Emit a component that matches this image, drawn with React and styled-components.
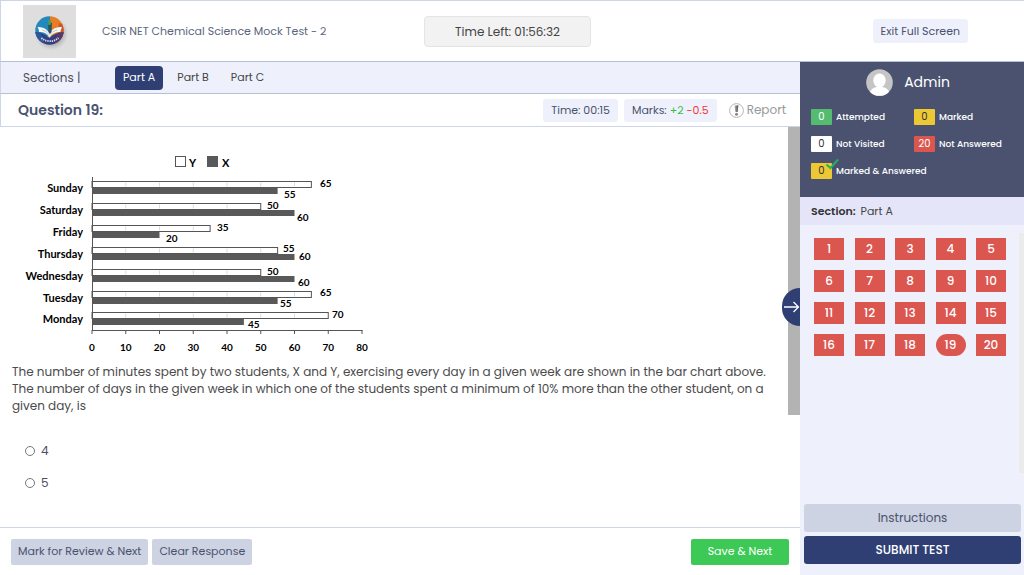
import React, { useState } from 'react';
import styled, { createGlobalStyle } from 'styled-components';

const GlobalStyle = createGlobalStyle`
  * {
    box-sizing: border-box;
  }
  body {
    margin: 0;
    background: #fff;
    color: #4b4f5c;
    font-family: Poppins, Inter, "Liberation Sans", sans-serif;
    font-size: 12px;
  }
  button {
    font-family: inherit;
    border: 0;
    padding: 0;
    cursor: pointer;
  }
`;

const Page = styled.div`
  display: flex;
  flex-direction: column;
  min-height: 100vh;
`;

const Header = styled.header`
  display: grid;
  grid-template-columns: minmax(0, 1fr) auto minmax(0, 1fr);
  align-items: center;
  height: 62px;
  padding-right: 10px;
  border-top: 1px solid #cfd5e8;
  border-left: 1px solid #cfd5e8;
  border-bottom: 1px solid #b6bfd6;
`;

const Brand = styled.div`
  display: flex;
  align-items: center;
  gap: 26px;
  padding-left: 22px;

  svg {
    display: block;
  }
`;

const TestName = styled.h1`
  margin: 0;
  font-size: 11px;
  font-weight: 400;
  color: #5b6580;
  white-space: nowrap;
`;

const Timer = styled.div`
  min-width: 167px;
  padding: 5px 20px;
  border: 1px solid #e4e4e4;
  border-radius: 4px;
  background: #f2f2f2;
  color: #444;
  font-size: 12px;
  line-height: 19px;
  text-align: center;
`;

const HeaderRight = styled.div`
  display: flex;
  justify-content: flex-end;
  padding-right: 46px;
`;

const ExitButton = styled.button`
  height: 24px;
  padding: 0 8px;
  border-radius: 3px;
  background: #eef1fb;
  color: #4a5270;
  font-size: 11px;
`;

const Body = styled.div`
  display: grid;
  flex: 1;
  grid-template-columns: 25fr 7fr;
`;

const Main = styled.main`
  position: relative;
  display: flex;
  flex-direction: column;
  min-width: 0;
`;

const SectionBar = styled.nav`
  display: flex;
  align-items: center;
  height: 32px;
  padding-left: 22px;
  border-left: 1px solid #cfd5e8;
  border-bottom: 1px solid #b6bfd6;
  background: #eef1fb;
`;

const SectionLabel = styled.span`
  width: 92px;
  font-size: 12px;
  color: #4b4f5c;
`;

const Tab = styled.button`
  height: 24px;
  padding: 0 8px;
  margin-right: 6px;
  border-radius: 4px;
  background: ${(props) => (props.$active ? '#2f3f74' : 'transparent')};
  color: ${(props) => (props.$active ? '#fff' : '#444')};
  font-size: 11px;
`;

const QuestionBar = styled.div`
  display: flex;
  align-items: center;
  gap: 6px;
  height: 33px;
  padding: 0 14px 0 17px;
  border-left: 1px solid #cfd5e8;
  border-bottom: 1px solid #cfd5e8;
`;

const QuestionTitle = styled.h2`
  flex: 1;
  margin: 0;
  font-size: 14px;
  font-weight: 600;
  color: #4a5270;
`;

const Pill = styled.span`
  padding: 3px 8px;
  border-radius: 3px;
  background: #eef1fb;
  color: #4a5270;
  font-size: 11px;
  line-height: 17px;
`;

const Mark = styled.span`
  color: ${(props) => (props.$negative ? '#f03a3a' : '#35bf4b')};
`;

const ReportButton = styled.button`
  display: flex;
  align-items: center;
  gap: 3px;
  padding-left: 6px;
  background: none;
  color: #999;
  font-size: 12px;
`;

const QuestionArea = styled.div`
  display: flex;
  flex: 1;
`;

const QuestionContent = styled.div`
  flex: 1;
  min-width: 0;
  padding: 23px 12px 20px;
`;

const ScrollTrack = styled.div`
  width: ${(props) => (props.$thin ? '5px' : '12px')};
`;

const ScrollThumb = styled.div`
  height: ${(props) => (props.$thin ? '100%' : '72%')};
  background: ${(props) => (props.$thin ? '#ebebeb' : '#b3b3b3')};
`;

const Chart = styled.svg`
  display: block;
  font-family: Lato, "Open Sans", sans-serif;
  font-size: 10px;
  font-weight: 700;
  fill: #000;
`;

const QuestionText = styled.p`
  margin: 4px 0 0;
  font-size: 12px;
  line-height: 17px;
  color: #4b4b4b;
`;

const Options = styled.div`
  display: flex;
  flex-direction: column;
  gap: 16px;
  padding: 29px 0 0 13px;
`;

const Option = styled.label`
  display: flex;
  align-items: center;
  gap: 6px;
  font-size: 12px;
  line-height: 16px;

  input {
    appearance: none;
    width: 10px;
    height: 10px;
    margin: 0;
    border: 1px solid #777;
    border-radius: 50%;
    background: #fff;
  }
  input:checked {
    border: 3px solid #2f3f74;
  }
`;

const Footer = styled.footer`
  display: flex;
  align-items: center;
  gap: 4px;
  height: 48px;
  padding: 0 11px;
  border-top: 1px solid #cfd8e2;
`;

const FooterButton = styled.button`
  height: 26px;
  padding: 0 7px;
  border-radius: 2px;
  background: #cdd3e2;
  color: #4a5270;
  font-size: 11px;
`;

const SaveButton = styled(FooterButton)`
  min-width: 98px;
  margin-left: auto;
  background: #3dc955;
  color: #fff;
`;

const CollapseButton = styled.button`
  position: absolute;
  right: 0;
  top: calc(50% - 12px);
  transform: translateY(-50%);
  display: flex;
  align-items: center;
  justify-content: flex-end;
  width: 18px;
  height: 38px;
  border-radius: 19px 0 0 19px;
  background: #2f3f74;
`;

const Sidebar = styled.aside`
  display: flex;
  flex-direction: column;
  background: #eef1fb;
`;

const Profile = styled.div`
  height: 135px;
  padding: 7px 11px;
  background: #4a5270;
  color: #fff;
`;

const User = styled.div`
  display: flex;
  align-items: center;
  justify-content: center;
  gap: 11px;
  height: 27px;
  padding-right: 8px;
  font-size: 14px;
`;

const Legend = styled.ul`
  display: grid;
  grid-template-columns: 103px 1fr;
  row-gap: 11px;
  margin: 13px 0 0;
  padding: 0;
  list-style: none;
`;

const LegendItem = styled.li`
  display: flex;
  align-items: center;
  gap: 4px;
  grid-column: ${(props) => (props.$wide ? '1 / -1' : 'auto')};
  font-size: 9px;
  font-weight: 500;
  line-height: 16px;
  white-space: nowrap;
`;

const Badge = styled.span`
  position: relative;
  width: 21px;
  height: 16px;
  border-radius: 1px;
  background: ${(props) => props.$bg};
  color: ${(props) => props.$color || '#333'};
  font-size: 10px;
  font-weight: 400;
  text-align: center;

  svg {
    position: absolute;
    right: -7px;
    top: -5px;
  }
`;

const SectionName = styled.div`
  height: 28px;
  padding-left: 11px;
  background: #e5e5f9;
  color: #444;
  font-size: 11px;
  line-height: 28px;

  strong {
    margin-right: 2px;
    color: #333;
    font-weight: 600;
  }
`;

const PaletteArea = styled.div`
  display: flex;
  justify-content: space-between;
  height: 240px;
  margin-top: 8px;
`;

const Palette = styled.div`
  display: grid;
  flex: 1;
  grid-template-columns: repeat(5, 30px);
  align-content: start;
  justify-content: space-between;
  row-gap: 10px;
  padding: 5px 13px 0 14px;
`;

const PaletteButton = styled.button`
  height: 22px;
  border-radius: ${(props) => (props.$current ? '11px' : '0')};
  background: #db564f;
  color: #fff;
  font-size: 12px;
  font-weight: 500;
`;

const SideActions = styled.div`
  display: flex;
  flex-direction: column;
  gap: 4px;
  margin-top: auto;
  padding: 0 3px 11px 4px;
`;

const SideButton = styled.button`
  height: 28px;
  border-radius: 3px;
  background: ${(props) => (props.$primary ? '#2f3f74' : '#cdd3e2')};
  color: ${(props) => (props.$primary ? '#fff' : '#4a5270')};
  font-size: 12px;
  font-weight: ${(props) => (props.$primary ? 500 : 400)};
`;

const sections = ['Part A', 'Part B', 'Part C'];

// yLabel / xLabel: where the value sits, [x, offset from the row top]
const days = [
  { day: 'Sunday', y: 65, x: 55, yLabel: [308, 5], xLabel: [272, 16] },
  { day: 'Saturday', y: 50, x: 60, yLabel: [255, 5], xLabel: [285, 17] },
  { day: 'Friday', y: 35, x: 20, yLabel: [205, 5], xLabel: [154, 16] },
  { day: 'Thursday', y: 55, x: 60, yLabel: [271, 4], xLabel: [287, 12] },
  { day: 'Wednesday', y: 50, x: 60, yLabel: [255, 5], xLabel: [286, 16] },
  { day: 'Tuesday', y: 65, x: 55, yLabel: [308, 4], xLabel: [268, 15] },
  { day: 'Monday', y: 70, x: 45, yLabel: [320, 5], xLabel: [236, 15] },
];

const ticks = [0, 10, 20, 30, 40, 50, 60, 70, 80];
const axisX = 80;
const axisBottom = 181;
const rowPitch = 21.9;
const toX = (value) => axisX + value * 3.375;

function MinutesChart() {
  return (
    <Chart width="365" height="209" viewBox="0 0 365 209" role="img" aria-label="Minutes exercised per day">
      <rect x="163.5" y="6.5" width="10" height="10" fill="#fff" stroke="#555" />
      <text x="177" y="17" fontSize="11">Y</text>
      <rect x="195" y="6" width="11" height="11" fill="#595959" />
      <text x="210" y="17" fontSize="11">X</text>
      {days.map((d, i) => {
        const top = Math.round(31 + i * rowPitch) + 0.5;
        return (
          <g key={d.day}>
            <text x="71" y={top + 10} textAnchor="end" fontSize="11">{d.day}</text>
            <rect x={axisX} y={top} width={toX(d.y) - axisX} height="6" fill="#fff" stroke="#555" />
            {ticks.filter((t) => t > 0 && t < d.y && t < 70).map((t) => (
              <line key={t} x1={toX(t)} x2={toX(t)} y1={top + 1} y2={top + 5} stroke="#dcdcdc" />
            ))}
            <rect x={axisX} y={top + 6.5} width={toX(d.x) - axisX} height="6" fill="#595959" />
            <text x={d.yLabel[0]} y={top + d.yLabel[1]}>{d.y}</text>
            <text x={d.xLabel[0]} y={top + d.xLabel[1]}>{d.x}</text>
          </g>
        );
      })}
      <path d={`M80.5 27V${axisBottom}M80 180.5H350.5`} stroke="#555" fill="none" />
      {ticks.map((t) => (
        <g key={t}>
          <line x1={toX(t)} x2={toX(t)} y1="180" y2="184" stroke="#555" />
          <text x={toX(t)} y="201" textAnchor="middle">{t}</text>
        </g>
      ))}
    </Chart>
  );
}

function Logo() {
  return (
    <svg width="53" height="53" viewBox="0 0 53 53" role="img" aria-label="Logo">
      <defs>
        <clipPath id="disc"><circle cx="26.5" cy="25.5" r="14.2" /></clipPath>
        <radialGradient id="shadow">
          <stop offset="0.6" stopColor="#888" stopOpacity="0.6" />
          <stop offset="1" stopColor="#aaa" stopOpacity="0" />
        </radialGradient>
      </defs>
      <rect width="53" height="53" fill="#dedede" />
      <circle cx="28.500" cy="28.500" r="17" fill="url(#shadow)" />
      <g clipPath="url(#disc)">
        <path d="M12 10h15v21H12z" fill="#2389bd" />
        <path d="M27 10h15v21H27z" fill="#e87d25" />
        <path d="M36 18l6 2v16l-8-2z" fill="#c9582b" />
        <path d="M11 27c6 0 11 2 15.500 6 4-4 9-6 16-6v14H11z" fill="#343f80" />
        <path d="M11 27l7 2 3 10-9-3z" fill="#285b9c" />
        <path d="M42 27l-8 2-3 11 10-3z" fill="#553c6c" />
      </g>
      <path d="M14.500 22c5-.5 9 1.500 12 6 3-4.500 7-6.500 12.500-6-1 2-1.500 3.500-1.500 5-4.500-.2-8 1.200-11 5-3-3.800-6-5-10.500-5 0-1.700-.5-3.200-1.500-5z" fill="#f6f6f6" />
      <path d="M19 25c3 .6 5 2 7.500 5 2.500-3 4.500-4.400 8-5" fill="none" stroke="#b8bfc9" strokeWidth=".8" />
      <path d="M25 18h4l-.5 9-1.600 2-1.400-2z" fill="#2c5360" />
      <path d="M26.500 14l2 3-1 3h-2l-.8-3z" fill="#4a9a58" />
      <path d="M18.500 33c4 4 12 4.500 17 0" fill="none" stroke="#dfe3f2" strokeWidth="1.800" strokeDasharray="1.300 .9" />
    </svg>
  );
}

function Avatar() {
  return (
    <svg width="27" height="27" viewBox="0 0 27 27" aria-hidden="true">
      <defs>
        <clipPath id="avatar"><circle cx="13.500" cy="13.500" r="13.300" /></clipPath>
      </defs>
      <g clipPath="url(#avatar)">
        <rect width="27" height="27" fill="#c5c5c5" />
        <ellipse cx="13.500" cy="11.500" rx="6.200" ry="7" fill="#fff" />
        <path d="M3 27c.5-6 4-8.500 8-9h5c4.500.5 7.500 3 8 9z" fill="#fff" />
      </g>
    </svg>
  );
}

function App() {
  const [section, setSection] = useState('Part A');
  const [current, setCurrent] = useState(19);

  return (
    <>
      <GlobalStyle />
      <Page>
        <Header>
          <Brand>
            <Logo />
            <TestName>CSIR NET Chemical Science Mock Test - 2</TestName>
          </Brand>
          <Timer>Time Left: 01:56:32</Timer>
          <HeaderRight>
            <ExitButton>Exit Full Screen</ExitButton>
          </HeaderRight>
        </Header>
        <Body>
          <Main>
            <SectionBar>
              <SectionLabel>Sections |</SectionLabel>
              {sections.map((name) => (
                <Tab key={name} $active={name === section} onClick={() => setSection(name)}>
                  {name}
                </Tab>
              ))}
            </SectionBar>
            <QuestionBar>
              <QuestionTitle>Question {current}:</QuestionTitle>
              <Pill>Time: 00:15</Pill>
              <Pill>
                Marks: <Mark>+2</Mark> <Mark $negative>-0.5</Mark>
              </Pill>
              <ReportButton>
                <svg width="15" height="15" viewBox="0 0 15 15" aria-hidden="true">
                  <circle cx="7.500" cy="7.500" r="6.900" fill="#fff" stroke="#b5b5b5" />
                  <path d="M5.600 2.500h3.800l-.8 6.500H6.400z" fill="#999" />
                  <path d="M7.500 2.500h1.900l-.8 6.500H7.500z" fill="#666" />
                  <circle cx="7.500" cy="11.300" r="1.500" fill="#888" />
                </svg>
                Report
              </ReportButton>
            </QuestionBar>
            <QuestionArea>
              <QuestionContent>
                <MinutesChart />
                <QuestionText>
                  The number of minutes spent by two students, X and Y, exercising every day in a given
                  week are shown in the bar chart above. The number of days in the given week in which
                  one of the students spent a minimum of 10% more than the other student, on a given
                  day, is
                </QuestionText>
                <Options>
                  <Option><input type="radio" name="answer" value="4" />4</Option>
                  <Option><input type="radio" name="answer" value="5" />5</Option>
                </Options>
              </QuestionContent>
              <ScrollTrack>
                <ScrollThumb />
              </ScrollTrack>
            </QuestionArea>
            <Footer>
              <FooterButton>Mark for Review &amp; Next</FooterButton>
              <FooterButton>Clear Response</FooterButton>
              <SaveButton>Save &amp; Next</SaveButton>
            </Footer>
            <CollapseButton aria-label="Collapse sidebar">
              <svg width="17" height="14" viewBox="0 0 17 14" fill="none" stroke="#fff" strokeWidth="1.300">
                <path d="M1 7h14.500M10.500 2l5 5-5 5" />
              </svg>
            </CollapseButton>
          </Main>
          <Sidebar>
            <Profile>
              <User>
                <Avatar />
                Admin
              </User>
              <Legend>
                <LegendItem><Badge $bg="#55bb70" $color="#fff">0</Badge>Attempted</LegendItem>
                <LegendItem><Badge $bg="#ecc834">0</Badge>Marked</LegendItem>
                <LegendItem><Badge $bg="#fff">0</Badge>Not Visited</LegendItem>
                <LegendItem><Badge $bg="#db564f" $color="#fff">20</Badge>Not Answered</LegendItem>
                <LegendItem $wide>
                  <Badge $bg="#ecc834">
                    0
                    <svg width="14" height="12" viewBox="0 0 14 12" fill="none" stroke="#27ae60" strokeWidth="2">
                      <path d="M1.500 6.500l4 3.500L13 1.500" />
                    </svg>
                  </Badge>
                  Marked &amp; Answered
                </LegendItem>
              </Legend>
            </Profile>
            <SectionName><strong>Section:</strong> {section}</SectionName>
            <PaletteArea>
              <Palette>
                {Array.from({ length: 20 }, (_, i) => i + 1).map((n) => (
                  <PaletteButton key={n} $current={n === current} onClick={() => setCurrent(n)}>
                    {n}
                  </PaletteButton>
                ))}
              </Palette>
              <ScrollTrack $thin>
                <ScrollThumb $thin />
              </ScrollTrack>
            </PaletteArea>
            <SideActions>
              <SideButton>Instructions</SideButton>
              <SideButton $primary>SUBMIT TEST</SideButton>
            </SideActions>
          </Sidebar>
        </Body>
      </Page>
    </>
  );
}

export default App;
